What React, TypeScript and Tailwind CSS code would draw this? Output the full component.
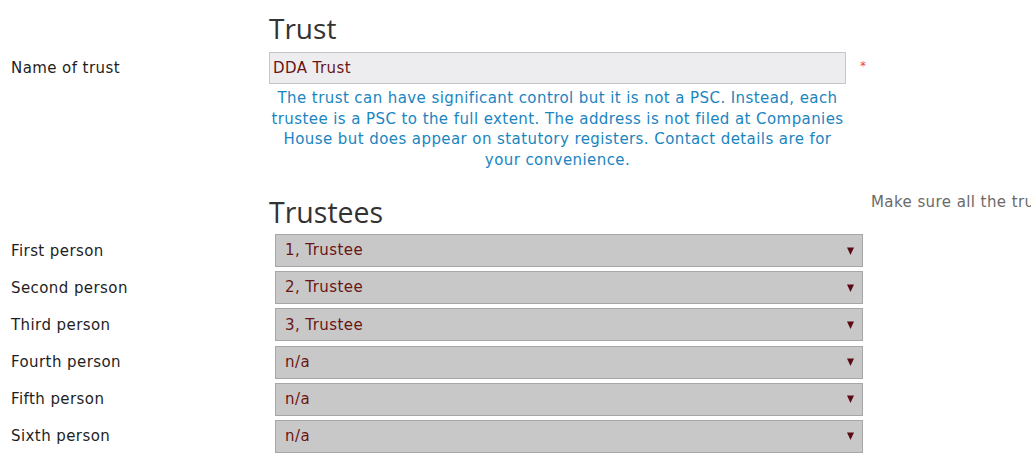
import React from "react";

const trustees = [
  { label: "First person", value: "1, Trustee" },
  { label: "Second person", value: "2, Trustee" },
  { label: "Third person", value: "3, Trustee" },
  { label: "Fourth person", value: "n/a" },
  { label: "Fifth person", value: "n/a" },
  { label: "Sixth person", value: "n/a" },
];

function Arrow() {
  return (
    <svg width="7" height="8" viewBox="0 0 7 8" className="block">
      <polygon points="0,0.5 7,0.5 3.5,8" fill="#5b0b16" />
    </svg>
  );
}

export default function App() {
  return (
    <div className="w-[1031px] h-[474px] overflow-hidden bg-white font-['DejaVu_Sans',sans-serif] text-[15px] tracking-[0.42px] text-[#1e1e1e]">
      {/* Trust section */}
      <div className="pl-[269px] pt-[9px] mb-[5px]">
        <h2 className="font-['Open_Sans',sans-serif] text-[28px] leading-[38px] tracking-normal text-[#333]">Trust</h2>
      </div>
      <div className="flex items-center h-[32px]">
        <div className="w-[269px] pl-[11px] leading-[20px]">Name of trust</div>
        <div className="w-[577px] h-[32px] bg-[#ededf0] border border-[#c6c6ca] flex items-center pl-[3px] text-[#6b1414]">
          DDA Trust
        </div>
        <div className="ml-[14px] text-[#e2405a] text-[12px] leading-[12px] -mt-[4px]">*</div>
      </div>
      <div className="ml-[269px] w-[577px] mt-[4px] text-center leading-[20.5px] text-[#1a85bf]">
        The trust can have significant control but it is not a PSC. Instead, each trustee is a PSC to the full extent. The address is not filed at Companies House but does appear on statutory registers. Contact details are for your convenience.
      </div>

      {/* Trustees section */}
      <div className="flex items-start mt-[23px]">
        <div className="w-[269px] shrink-0" />
        <div className="w-[602px] shrink-0">
          <h2 className="font-['Open_Sans',sans-serif] text-[28.5px] leading-[38px] tracking-normal text-[#333]">Trustees</h2>
        </div>
        <div className="whitespace-nowrap text-[#6a6a6a] leading-[20.5px] -mt-[1px]">
          Make sure all the trustees are listed here.
        </div>
      </div>
      <div className="flex flex-col gap-[4.2px] mt-[3px]">
        {trustees.map((t) => (
          <div key={t.label} className="flex items-center h-[33px]">
            <div className="w-[275px] pl-[11px] leading-[20px]">{t.label}</div>
            <div className="w-[588px] h-[33px] bg-[#c8c8c8] border border-[#a6a6a6] flex items-center justify-between pl-[9px] pr-[8px] text-[#6b1414]">
              <span>{t.value}</span>
              <Arrow />
            </div>
          </div>
        ))}
      </div>
    </div>
  );
}
